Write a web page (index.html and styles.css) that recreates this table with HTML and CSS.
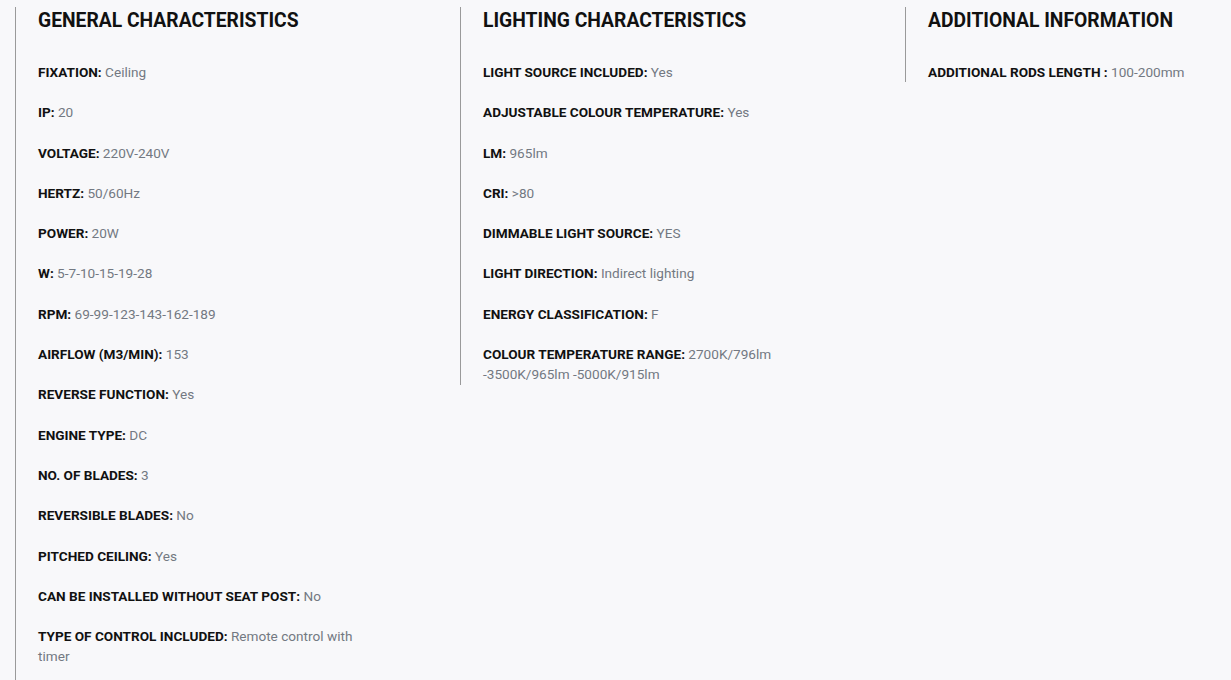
FILE: index.html
```html
<!DOCTYPE html>
<html lang="en">
<head>
<meta charset="utf-8">
<title>Characteristics</title>
<link rel="stylesheet" href="styles.css">
</head>
<body>
<div class="specs">
  <section class="col col-main">
    <h2 class="col-title">GENERAL CHARACTERISTICS</h2>
    <ul class="list">
      <li><b>FIXATION:</b> Ceiling</li>
      <li><b>IP:</b> 20</li>
      <li><b>VOLTAGE:</b> 220V-240V</li>
      <li><b>HERTZ:</b> 50/60Hz</li>
      <li><b>POWER:</b> 20W</li>
      <li><b>W:</b> 5-7-10-15-19-28</li>
      <li><b>RPM:</b> 69-99-123-143-162-189</li>
      <li><b>AIRFLOW (M3/MIN):</b> 153</li>
      <li><b>REVERSE FUNCTION:</b> Yes</li>
      <li><b>ENGINE TYPE:</b> DC</li>
      <li><b>NO. OF BLADES:</b> 3</li>
      <li><b>REVERSIBLE BLADES:</b> No</li>
      <li><b>PITCHED CEILING:</b> Yes</li>
      <li><b>CAN BE INSTALLED WITHOUT SEAT POST:</b> No</li>
      <li><b>TYPE OF CONTROL INCLUDED:</b> Remote control with timer</li>
    </ul>
  </section>
  <section class="col">
    <h2 class="col-title">LIGHTING CHARACTERISTICS</h2>
    <ul class="list">
      <li><b>LIGHT SOURCE INCLUDED:</b> Yes</li>
      <li><b>ADJUSTABLE COLOUR TEMPERATURE:</b> Yes</li>
      <li><b>LM:</b> 965lm</li>
      <li><b>CRI:</b> &gt;80</li>
      <li><b>DIMMABLE LIGHT SOURCE:</b> YES</li>
      <li><b>LIGHT DIRECTION:</b> Indirect lighting</li>
      <li><b>ENERGY CLASSIFICATION:</b> F</li>
      <li><b>COLOUR TEMPERATURE RANGE:</b> 2700K/796lm -3500K/965lm -5000K/915lm</li>
    </ul>
  </section>
  <section class="col col-last">
    <h2 class="col-title">ADDITIONAL INFORMATION</h2>
    <ul class="list">
      <li><b>ADDITIONAL RODS LENGTH :</b> 100-200mm</li>
    </ul>
  </section>
</div>
</body>
</html>
```

FILE: styles.css
```css
html, body {
  margin: 0;
  padding: 0;
  background: #f8f8fa;
}

body {
  font-family: Roboto, "Liberation Sans", Arial, sans-serif;
  color: #737982;
  overflow: hidden;
}

.specs {
  display: flex;
  align-items: flex-start;
  padding: 7px 0 0 15px;
}

.col {
  flex: 0 0 445px;
  box-sizing: border-box;
  border-left: 1px solid #9a9a9a;
  padding-left: 22px;
  padding-right: 92px;
}

.col-main {
  padding-bottom: 24px;
}

.col-last {
  flex: 1 1 auto;
  min-width: 0;
  padding-right: 0;
}

.col-title {
  margin: 0;
  padding-top: 2px;
  font-size: 19.3px;
  line-height: 24px;
  font-weight: 700;
  color: #111;
}

.list {
  list-style: none;
  margin: 29px 0 0;
  padding: 0;
  display: flex;
  flex-direction: column;
  gap: 20px;
  font-size: 13.6px;
  line-height: 20.3px;
}

.list b {
  font-weight: 700;
  color: #111;
}
```
